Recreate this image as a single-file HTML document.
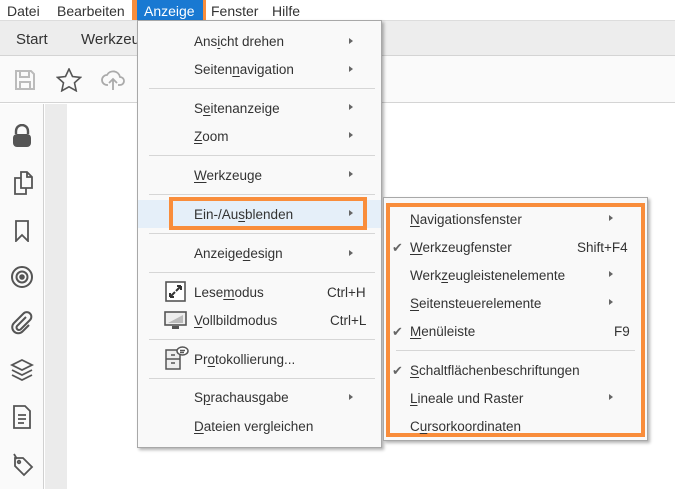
<!DOCTYPE html>
<html><head><meta charset="utf-8"><style>
*{margin:0;padding:0;box-sizing:border-box}
body{width:675px;height:489px;overflow:hidden;background:#fff;font-family:"Liberation Sans",sans-serif;font-size:13.5px;color:#333;position:relative}
.a{position:absolute;white-space:nowrap}
div.a,.ck{padding-top:1px}
.u{text-decoration:underline;text-underline-offset:2px}
.sep{position:absolute;height:1px;background:#d6d6d6}
.arr{position:absolute;width:0;height:0;border-left:4px solid #666;border-top:3.5px solid transparent;border-bottom:3.5px solid transparent}
.ck{position:absolute;color:#666;font-size:13px}
</style></head><body>
<!-- menubar -->
<div class="a" style="left:0;top:0;width:675px;height:20px;background:#fff"></div>
<div class="a" style="left:7px;top:2px;font-size:14px">Datei</div>
<div class="a" style="left:57px;top:2px;font-size:14px">Bearbeiten</div>
<div class="a" style="left:132px;top:0;width:74px;height:24px;background:#f98d3b"></div>
<div class="a" style="left:137px;top:0;width:66px;height:20px;background:#1979d2;color:#fff;font-size:14px;padding:3px 0 0 7px">Anzeige</div>
<div class="a" style="left:211px;top:2px;font-size:14px">Fenster</div>
<div class="a" style="left:272px;top:2px;font-size:14px">Hilfe</div>
<!-- toolbar -->
<div class="a" style="left:0;top:20px;width:675px;height:36px;background:#ededed;border-top:1px solid #ddd;border-bottom:1px solid #d4d4d4"></div>
<div class="a" style="left:16px;top:30px;font-size:15px">Start</div>
<div class="a" style="left:81px;top:30px;font-size:15px">Werkzeuge</div>
<div class="a" style="left:0;top:56px;width:675px;height:47px;background:#fafafa;border-bottom:1px solid #d4d4d4"></div>
<svg class="a" style="left:14px;top:69px" width="22" height="22" viewBox="0 0 22 22" fill="none" stroke="#bbb" stroke-width="2"><path d="M2 2h15l3 3v15H2z M6 2v6h9V2 M6 20v-7h10v7"/></svg>
<svg class="a" style="left:56px;top:68px" width="26" height="24" viewBox="0 0 26 24" fill="none" stroke="#555" stroke-width="1.6"><path d="M13 1l3.5 7.5 8 .9-6 5.4 1.7 8L13 18.8 5.8 22.8l1.7-8-6-5.4 8-.9z"/></svg>
<svg class="a" style="left:101px;top:69px" width="24" height="22" viewBox="0 0 24 22" fill="none" stroke="#aaa" stroke-width="1.8"><path d="M7 16H6a5 5 0 0 1 0-10 7 7 0 0 1 13 2 4 4 0 0 1 0 8h-2 M12 21V10 M8 14l4-4 4 4"/></svg>
<!-- sidebar -->
<div class="a" style="left:0;top:104px;width:44px;height:385px;background:#fafafa;border-right:1px solid #d0d0d0"></div>
<div class="a" style="left:45px;top:104px;width:22px;height:385px;background:#ebebeb"></div>
<svg class="a" style="left:12px;top:124px" width="20" height="24" viewBox="0 0 20 24"><path d="M4 10V7a6 6 0 0 1 12 0v3" fill="none" stroke="#555" stroke-width="2.4"/><rect x="1" y="10" width="18" height="13" rx="4" fill="#555"/></svg>
<svg class="a" style="left:13px;top:171px" width="20" height="24" viewBox="0 0 20 24" fill="none" stroke="#555" stroke-width="1.8"><path d="M8 5V1h6l5 5v11H8z M14 1v5h5 M8 7H2v16h11v-6"/></svg>
<svg class="a" style="left:14px;top:220px" width="16" height="22" viewBox="0 0 16 22" fill="none" stroke="#555" stroke-width="1.8"><path d="M2 1h12v20l-6-6-6 6z"/></svg>
<svg class="a" style="left:10px;top:265px" width="24" height="24" viewBox="0 0 24 24" fill="none" stroke="#555" stroke-width="2"><circle cx="12" cy="12" r="10"/><circle cx="12" cy="12" r="5.5"/><circle cx="12" cy="12" r="1.8" fill="#555"/></svg>
<svg class="a" style="left:10px;top:311px" width="24" height="24" viewBox="0 0 24 24" fill="none" stroke="#555" stroke-width="2"><path d="M16 6L7 15a2.5 2.5 0 0 0 3.5 3.5L20 9a4.5 4.5 0 0 0-6.5-6.5L4 12a6 6 0 0 0 8.5 8.5L19 14"/></svg>
<svg class="a" style="left:10px;top:358px" width="24" height="24" viewBox="0 0 24 24" fill="none" stroke="#555" stroke-width="1.8"><path d="M12 2l10 5-10 5-10-5z M2 12l10 5 10-5 M2 17l10 5 10-5"/></svg>
<svg class="a" style="left:13px;top:405px" width="18" height="24" viewBox="0 0 18 24" fill="none" stroke="#555" stroke-width="1.8"><path d="M1 1h11l5 5v17H1z M5 10h8 M5 14h8 M5 18h6"/></svg>
<svg class="a" style="left:10px;top:452px" width="24" height="26" viewBox="0 0 24 26" fill="none" stroke="#555" stroke-width="1.8"><path d="M5 6l8 0 9 9-8 8-9-9z M4 2l3 5"/><circle cx="9" cy="10" r="1.3"/></svg>
<!-- main menu -->
<div class="a" style="left:137px;top:20px;width:245px;height:428px;background:#f9f9f9;border:1px solid #a8a8a8;box-shadow:2px 2px 3px rgba(0,0,0,.3)"></div>
<div class="a" style="left:138px;top:200px;width:243px;height:28px;background:#e5eff9"></div>
<div class="a" style="left:169px;top:197px;width:198px;height:33px;border:4px solid #f98d3b"></div>
<div class="a" style="left:194px;top:33px">Ans<span class="u">i</span>cht drehen</div><div class="arr" style="left:349px;top:38px"></div>
<div class="a" style="left:194px;top:61px">Seiten<span class="u">n</span>avigation</div><div class="arr" style="left:349px;top:66px"></div>
<div class="sep" style="left:149px;top:88px;width:226px"></div>
<div class="a" style="left:194px;top:100px">S<span class="u">e</span>itenanzeige</div><div class="arr" style="left:349px;top:104px"></div>
<div class="a" style="left:194px;top:128px"><span class="u">Z</span>oom</div><div class="arr" style="left:349px;top:132px"></div>
<div class="sep" style="left:149px;top:155px;width:226px"></div>
<div class="a" style="left:194px;top:167px"><span class="u">W</span>erkzeuge</div><div class="arr" style="left:349px;top:171px"></div>
<div class="sep" style="left:149px;top:194px;width:226px"></div>
<div class="a" style="left:194px;top:206px">Ein-/Au<span class="u">s</span>blenden</div><div class="arr" style="left:349px;top:210px"></div>
<div class="sep" style="left:149px;top:233px;width:226px"></div>
<div class="a" style="left:194px;top:245px">Anzeige<span class="u">d</span>esign</div><div class="arr" style="left:349px;top:250px"></div>
<div class="sep" style="left:149px;top:272px;width:226px"></div>
<svg class="a" style="left:165px;top:281px" width="21" height="21" viewBox="0 0 21 21"><rect x="1" y="1" width="19" height="19" fill="#fff" stroke="#555" stroke-width="1.6"/><path d="M5 16l5-5M5 16v-4M5 16h4 M16 5l-5 5M16 5v4M16 5h-4" stroke="#333" stroke-width="2" fill="none"/></svg>
<div class="a" style="left:194px;top:284px">Lese<span class="u">m</span>odus</div><div class="a" style="left:327px;top:284px">Ctrl+H</div>
<svg class="a" style="left:164px;top:311px" width="23" height="19" viewBox="0 0 23 19"><rect x="1" y="1" width="21" height="13" fill="#eee" stroke="#555" stroke-width="1.6"/><path d="M4 12L19 4v8z" fill="#bbb"/><rect x="8" y="15" width="7" height="3" fill="#555"/></svg>
<div class="a" style="left:194px;top:312px"><span class="u">V</span>ollbildmodus</div><div class="a" style="left:330px;top:312px">Ctrl+L</div>
<div class="sep" style="left:149px;top:339px;width:226px"></div>
<svg class="a" style="left:165px;top:346px" width="24" height="24" viewBox="0 0 24 24" fill="none" stroke="#555" stroke-width="1.5"><rect x="1" y="4" width="14" height="19" fill="#eee"/><path d="M1 13h14 M6 9h4 M6 17h4"/><ellipse cx="17.5" cy="5" rx="5.5" ry="4" fill="#fff"/><path d="M15 4.5h5 M15 6.5h4"/></svg>
<div class="a" style="left:194px;top:351px">Pr<span class="u">o</span>tokollierung...</div>
<div class="sep" style="left:149px;top:378px;width:226px"></div>
<div class="a" style="left:194px;top:389px">S<span class="u">p</span>rachausgabe</div><div class="arr" style="left:349px;top:394px"></div>
<div class="a" style="left:194px;top:418px"><span class="u">D</span>ateien vergleichen</div>
<!-- submenu -->
<div class="a" style="left:383px;top:197px;width:265px;height:244px;background:#f9f9f9;border:1px solid #a8a8a8;box-shadow:2px 2px 3px rgba(0,0,0,.3)"></div>
<div class="a" style="left:386px;top:203px;width:259px;height:234px;border:4px solid #f98d3b"></div>
<div class="a" style="left:410px;top:211px"><span class="u">N</span>avigationsfenster</div><div class="arr" style="left:609px;top:215px"></div>
<div class="ck" style="left:392px;top:239px">✔</div>
<div class="a" style="left:410px;top:239px"><span class="u">W</span>erkzeugfenster</div><div class="a" style="left:577px;top:239px">Shift+F4</div>
<div class="a" style="left:410px;top:267px">Werk<span class="u">z</span>eugleistenelemente</div><div class="arr" style="left:609px;top:271px"></div>
<div class="a" style="left:410px;top:295px"><span class="u">S</span>eitensteuerelemente</div><div class="arr" style="left:609px;top:299px"></div>
<div class="ck" style="left:392px;top:323px">✔</div>
<div class="a" style="left:410px;top:323px"><span class="u">M</span>enüleiste</div><div class="a" style="left:614px;top:323px">F9</div>
<div class="sep" style="left:396px;top:350px;width:239px"></div>
<div class="ck" style="left:392px;top:362px">✔</div>
<div class="a" style="left:410px;top:362px"><span class="u">S</span>chaltflächenbeschriftungen</div>
<div class="a" style="left:410px;top:390px"><span class="u">L</span>ineale und Raster</div><div class="arr" style="left:609px;top:394px"></div>
<div class="a" style="left:410px;top:418px">C<span class="u">u</span>rsorkoordinaten</div>
</body></html>
